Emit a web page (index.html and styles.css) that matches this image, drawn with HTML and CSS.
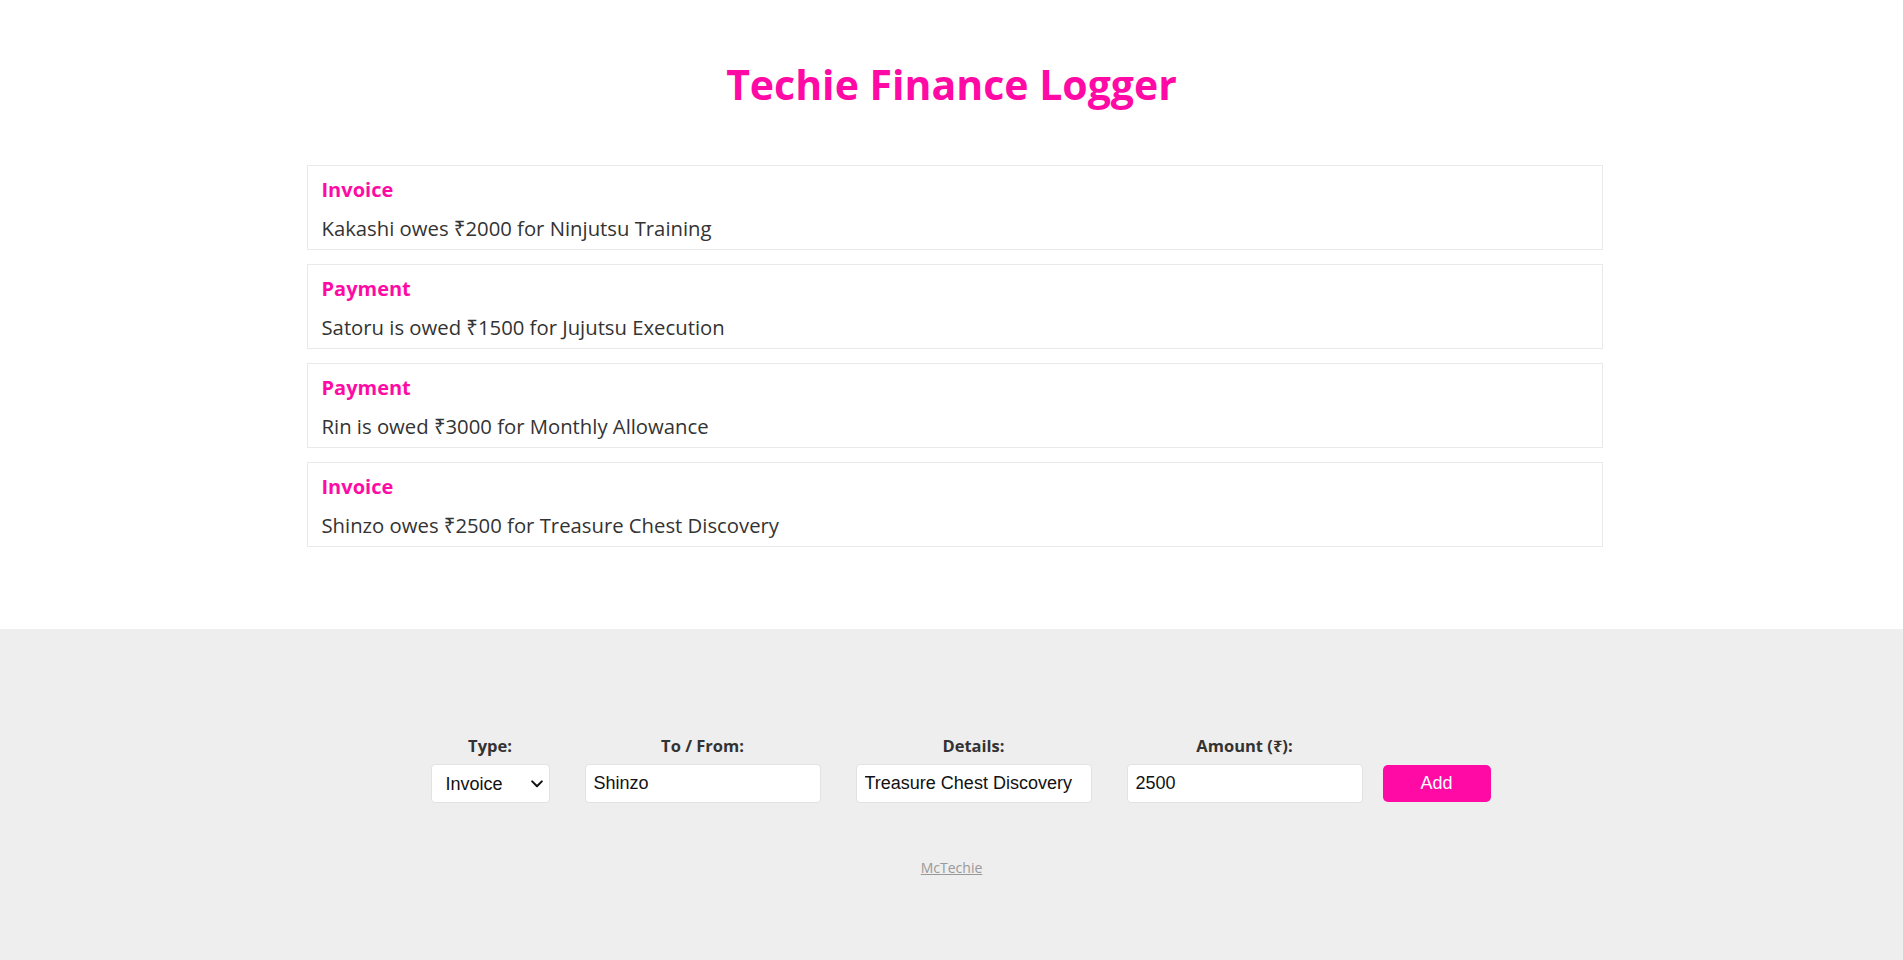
FILE: index.html
```html
<!DOCTYPE html>
<html lang="en">
<head>
<meta charset="UTF-8">
<title>Techie Finance Logger</title>
<link rel="stylesheet" href="styles.css">
</head>
<body>
  <header class="page-header">
    <h1 class="page-title">Techie Finance Logger</h1>
  </header>

  <main class="wrapper">
    <ul class="item-list">
      <li class="item">
        <h4 class="item-type">Invoice</h4>
        <p class="item-text">Kakashi owes ₹2000 for Ninjutsu Training</p>
      </li>
      <li class="item">
        <h4 class="item-type">Payment</h4>
        <p class="item-text">Satoru is owed ₹1500 for Jujutsu Execution</p>
      </li>
      <li class="item">
        <h4 class="item-type">Payment</h4>
        <p class="item-text">Rin is owed ₹3000 for Monthly Allowance</p>
      </li>
      <li class="item">
        <h4 class="item-type">Invoice</h4>
        <p class="item-text">Shinzo owes ₹2500 for Treasure Chest Discovery</p>
      </li>
    </ul>
  </main>

  <footer class="footer">
    <form class="new-item-form">
      <div class="field">
        <label class="field-label" for="type">Type:</label>
        <div class="select-wrap">
          <select id="type" class="field-select">
            <option value="invoice">Invoice</option>
            <option value="payment">Payment</option>
          </select>
          <svg class="select-arrow" width="12" height="8" viewBox="0 0 12 8" aria-hidden="true">
            <path d="M1.2 1.4 L6 6.2 L10.8 1.4" fill="none" stroke="#111" stroke-width="2" stroke-linecap="round" stroke-linejoin="round"/>
          </svg>
        </div>
      </div>
      <div class="field">
        <label class="field-label" for="tofrom">To / From:</label>
        <input id="tofrom" class="field-input" type="text" value="Shinzo">
      </div>
      <div class="field">
        <label class="field-label" for="details">Details:</label>
        <input id="details" class="field-input" type="text" value="Treasure Chest Discovery">
      </div>
      <div class="field">
        <label class="field-label" for="amount">Amount (₹):</label>
        <input id="amount" class="field-input" type="number" value="2500">
      </div>
      <button class="add-btn" type="button">Add</button>
    </form>
    <a class="credit" href="#">McTechie</a>
  </footer>
</body>
</html>
```

FILE: styles.css
```css
* {
  box-sizing: border-box;
}

html, body {
  margin: 0;
  padding: 0;
}

body {
  min-height: 100vh;
  display: flex;
  flex-direction: column;
  font-family: "Open Sans", "Noto Sans", "DejaVu Sans", sans-serif;
  color: #333;
  background: #fff;
}

.page-header {
  padding-top: 54px;
  text-align: center;
}

.page-title {
  margin: 0;
  font-size: 41px;
  line-height: 60px;
  font-weight: 700;
  color: #ff0aa5;
}

.wrapper {
  width: 1296px;
  margin: 51px 0 0 calc(50% - 645px);
  padding-bottom: 68px;
}

.item-list {
  list-style: none;
  margin: 0;
  padding: 0;
}

.item {
  border: 1px solid #e9e9e9;
  padding: 9px 14px 6px;
  margin-bottom: 14px;
}

.item-type {
  margin: 0 0 8px;
  font-size: 20px;
  line-height: 30px;
  font-weight: 700;
  color: #ff0aa5;
}

.item-text {
  margin: 0;
  font-size: 20.3px;
  line-height: 30px;
  color: #333;
}

.footer {
  flex: 1;
  background: #eeeeee;
  padding: 106px 0 40px;
  display: flex;
  flex-direction: column;
  align-items: center;
}

.new-item-form {
  display: flex;
  align-items: flex-end;
  gap: 20px;
  padding-left: 18px;
}

.field + .field {
  margin-left: 15px;
}

.field-label {
  display: block;
  text-align: center;
  font-size: 16.5px;
  line-height: 22px;
  font-weight: 700;
  color: #333;
  margin-bottom: 7px;
}

.select-wrap {
  position: relative;
  width: 119px;
}

.field-select {
  appearance: none;
  -webkit-appearance: none;
  display: block;
  width: 119px;
  height: 39px;
  padding: 0 24px 0 14px;
  border: 1px solid #e2e2e2;
  border-radius: 4px;
  background: #fff;
  font-family: "Liberation Sans", Arial, sans-serif;
  font-size: 18px;
  color: #111;
}

.select-arrow {
  position: absolute;
  right: 7px;
  top: 16px;
  pointer-events: none;
}

.field-input {
  display: block;
  width: 236px;
  height: 39px;
  padding: 0 8px;
  border: 1px solid #e2e2e2;
  border-radius: 4px;
  background: #fff;
  font-family: "Liberation Sans", Arial, sans-serif;
  font-size: 18px;
  color: #111;
  outline: none;
}

.field-input[type="number"]::-webkit-inner-spin-button,
.field-input[type="number"]::-webkit-outer-spin-button {
  -webkit-appearance: none;
  margin: 0;
}

.add-btn {
  width: 108px;
  height: 37px;
  margin-bottom: 1px;
  border: none;
  border-radius: 5px;
  background: #ff0aa5;
  color: #fff;
  font-family: "Liberation Sans", Arial, sans-serif;
  font-size: 18px;
  cursor: pointer;
}

.credit {
  margin-top: 55px;
  font-size: 14px;
  line-height: 20px;
  color: #999;
  text-decoration: underline;
}
```
